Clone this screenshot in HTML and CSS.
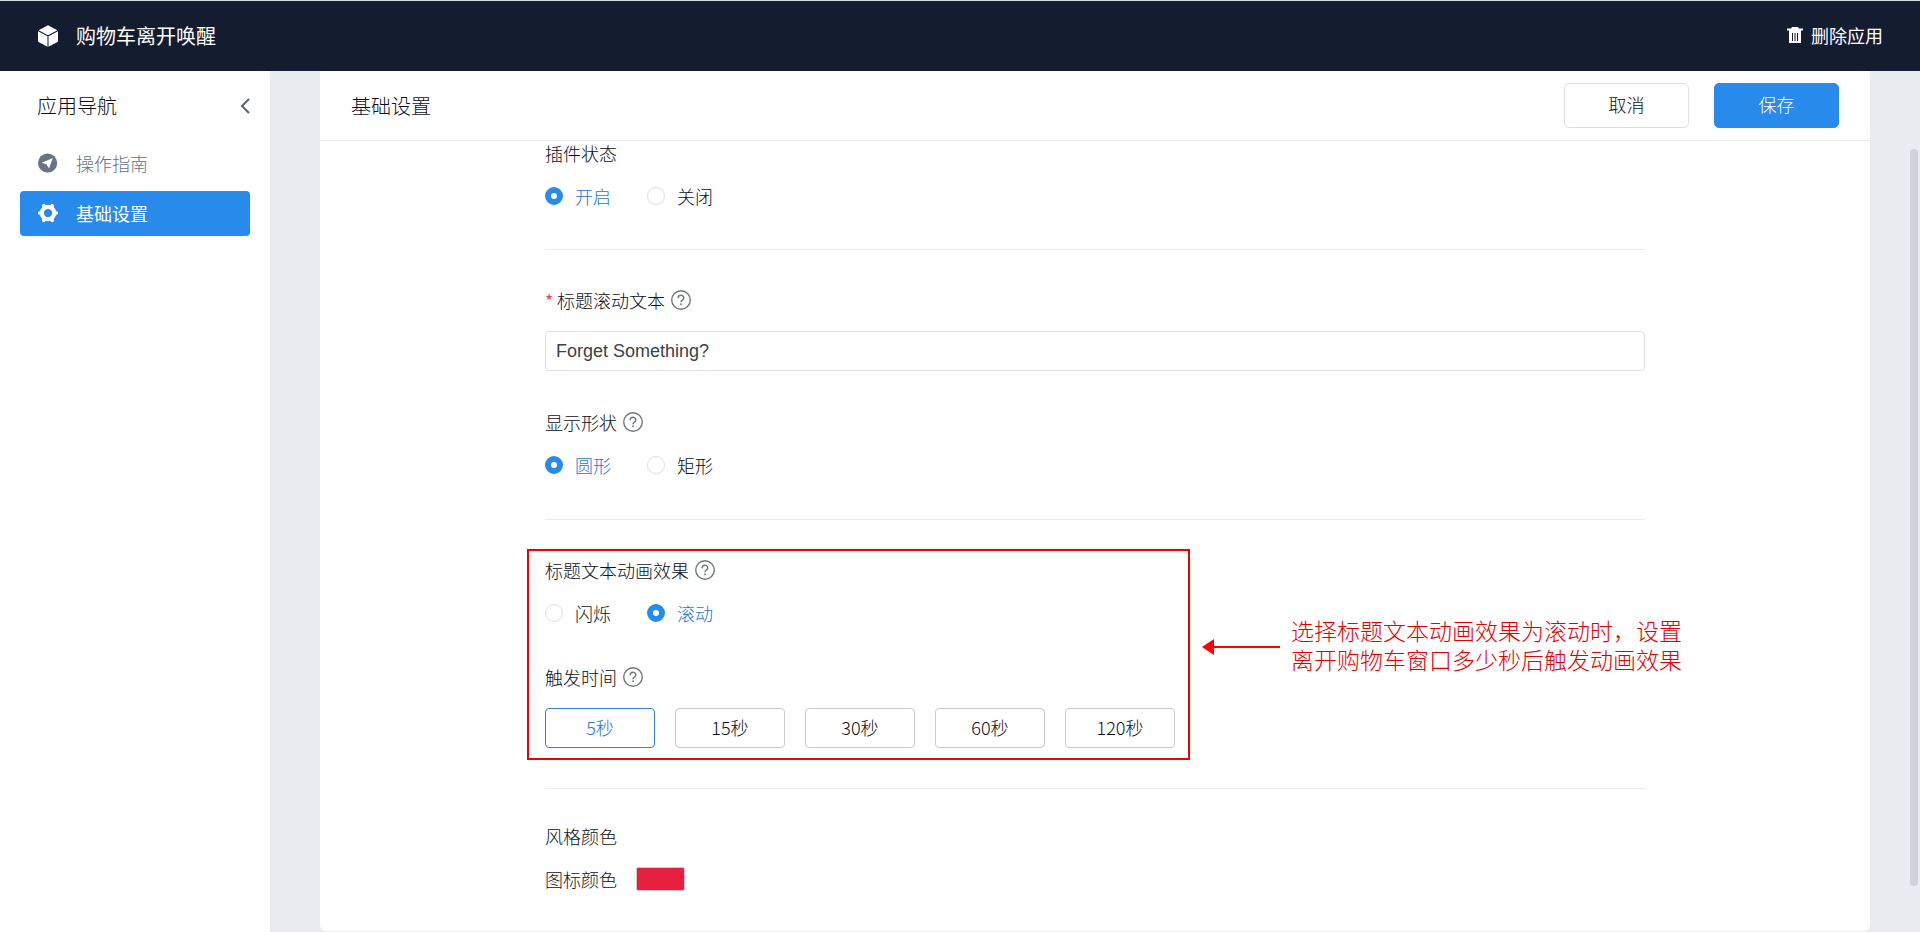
FILE: index.html
```html
<!DOCTYPE html>
<html lang="zh-CN">
<head>
<meta charset="utf-8">
<meta name="viewport" content="width=device-width, initial-scale=1">
<title>购物车离开唤醒</title>
<link rel="stylesheet" href="styles.css">
</head>
<body>
<svg class="sprite" aria-hidden="true">
  <symbol id="help" viewBox="0 0 20 20">
    <circle cx="10" cy="10" r="9.3" fill="none" stroke="currentColor" stroke-width="1.4"/>
    <path d="M7.200 8.200V7.600a2.800 2.600 0 1 1 4.300 2.400c-.9.600-1.500 1-1.500 2.200" fill="none" stroke="currentColor" stroke-width="1.500"/>
    <rect x="9.2" y="13.4" width="1.6" height="1.7" fill="currentColor"/>
  </symbol>
</svg>

<header class="topbar">
  <div class="brand">
    <svg class="icon" viewBox="0 0 20 22" aria-hidden="true">
      <path d="M10 .3 19.400 5.200 10 10.200.600 5.200zM0 6.200 9.500 11.300V21.700L0 16.700zM20 6.200 10.500 11.300V21.700L20 16.700z" fill="#fff"/>
    </svg>
    <h1 class="brand-name">购物车离开唤醒</h1>
  </div>
  <button class="delete" type="button">
    <svg class="trash" viewBox="0 0 16 16" aria-hidden="true">
      <path d="M5 0h6l1 1.500h4v2H0v-2h4z" fill="#fff"/>
      <path d="M2 3h12v13H2zM5 6v8h1V6zM7.500 6v8h1V6zM10 6v8h1V6z" fill="#fff" fill-rule="evenodd"/>
    </svg>
    删除应用
  </button>
</header>

<div class="layout">
  <aside class="sidebar">
    <div class="sidebar-head">
      <h2 class="heading">应用导航</h2>
      <button class="collapse" type="button" aria-label="收起">
        <svg class="chevron" viewBox="0 0 10 16" aria-hidden="true"><path d="M9 1 2 8l7 7" fill="none" stroke="currentColor" stroke-width="2"/></svg>
      </button>
    </div>
    <nav class="nav">
      <a class="nav-item" href="#guide">
        <svg class="icon" viewBox="0 0 20 20" aria-hidden="true">
          <circle cx="9.600" cy="10" r="9.600" fill="currentColor"/>
          <path d="M14.800 5 3.800 9.800l4.600 1.400L11 15.500z" fill="#fff"/>
        </svg>
        操作指南
      </a>
      <a class="nav-item active" href="#settings" aria-current="page">
        <svg class="icon" viewBox="0 0 20 20" aria-hidden="true">
          <circle cx="10" cy="10" r="6.200" fill="none" stroke="currentColor" stroke-width="4.200"/>
          <path d="M1.600 10h2.600M15.800 10h2.600M5.800 2.700 7 4.800M14.200 2.700 13 4.800M5.800 17.300 7 15.200M14.200 17.300 13 15.200" fill="none" stroke="currentColor" stroke-width="3.600" stroke-linecap="round"/>
        </svg>
        基础设置
      </a>
    </nav>
  </aside>

  <main class="card">
    <div class="card-head">
      <h2 class="heading">基础设置</h2>
      <div class="actions">
        <button class="btn" type="button">取消</button>
        <button class="btn primary" type="submit" form="settings">保存</button>
      </div>
    </div>

    <form class="form" id="settings">
      <section class="section first">
        <fieldset class="field">
          <legend class="label">插件状态</legend>
          <div class="radios">
            <label class="radio"><input type="radio" name="status" checked><span>开启</span></label>
            <label class="radio"><input type="radio" name="status"><span>关闭</span></label>
          </div>
        </fieldset>
      </section>

      <section class="section">
        <div class="field">
          <label class="label" for="title-text"><span class="required">*</span>标题滚动文本<svg class="help" aria-hidden="true"><use href="#help"/></svg></label>
          <input class="text" id="title-text" type="text" value="Forget Something?">
        </div>
        <fieldset class="field">
          <legend class="label">显示形状<svg class="help" aria-hidden="true"><use href="#help"/></svg></legend>
          <div class="radios">
            <label class="radio"><input type="radio" name="shape" checked><span>圆形</span></label>
            <label class="radio"><input type="radio" name="shape"><span>矩形</span></label>
          </div>
        </fieldset>
      </section>

      <section class="section timing">
        <div class="marked">
          <fieldset class="field">
            <legend class="label">标题文本动画效果<svg class="help" aria-hidden="true"><use href="#help"/></svg></legend>
            <div class="radios">
              <label class="radio"><input type="radio" name="effect"><span>闪烁</span></label>
              <label class="radio"><input type="radio" name="effect" checked><span>滚动</span></label>
            </div>
          </fieldset>
          <fieldset class="field">
            <legend class="label">触发时间<svg class="help" aria-hidden="true"><use href="#help"/></svg></legend>
            <div class="times">
              <button class="time selected" type="button" aria-pressed="true">5秒</button>
              <button class="time" type="button">15秒</button>
              <button class="time" type="button">30秒</button>
              <button class="time" type="button">60秒</button>
              <button class="time" type="button">120秒</button>
            </div>
          </fieldset>
          <div class="frame"></div>
          <div class="note">
            <svg class="arrow" viewBox="0 0 78 16" aria-hidden="true"><path d="M0 8 12 0v7h66v2H12v7z" fill="#f00"/></svg>
            <p class="note-text">选择标题文本动画效果为滚动时，设置<br>离开购物车窗口多少秒后触发动画效果</p>
          </div>
        </div>
      </section>

      <section class="section last">
        <h3 class="label">风格颜色</h3>
        <div class="color-row">
          <label for="icon-color">图标颜色</label>
          <input class="swatch" id="icon-color" type="color" value="#e8203f">
        </div>
      </section>
    </form>
  </main>
</div>
<div class="scroll-thumb"></div>
</body>
</html>
```

FILE: styles.css
```css
* { box-sizing: border-box; }

body {
  margin: 0;
  min-height: 100vh;
  display: flex;
  flex-direction: column;
  background: #e9edf2;
  color: #0c0e18;
  font: 300 18px/24px "Noto Sans CJK SC", sans-serif;
}

button, input { font: inherit; color: inherit; }
button { cursor: pointer; }
h1, h2, h3, p { margin: 0; font: inherit; }
svg { flex: none; display: block; }
.sprite { position: absolute; width: 0; height: 0; }

.topbar {
  height: 71px;
  padding: 0 37px 0 38px;
  display: flex;
  align-items: center;
  justify-content: space-between;
  border-top: 1px solid #d3dbe6;
  background: #141c30;
  color: #fff;
  font-weight: 400;
}
.brand { display: flex; align-items: center; gap: 18px; }
.brand-name, .heading { font-size: 20px; line-height: 28px; }
.icon { width: 20px; height: 20px; }
.brand .icon { height: 22px; }
.delete {
  display: flex;
  align-items: center;
  gap: 8px;
  padding: 0 0 2px;
  border: 0;
  background: none;
}
.trash { width: 16px; height: 16px; }

.layout { flex: 1; display: flex; }

.sidebar { width: 270px; flex: none; background: #fff; }
.sidebar-head {
  height: 70px;
  padding: 0 20px 0 37px;
  display: flex;
  align-items: center;
  justify-content: space-between;
}
.collapse { padding: 0; border: 0; background: none; color: #5c6474; }
.chevron { width: 10px; height: 16px; }
.nav { padding: 0 20px; display: flex; flex-direction: column; gap: 5px; }
.nav-item {
  height: 45px;
  padding: 0 18px 2px;
  display: flex;
  align-items: center;
  gap: 18px;
  border-radius: 4px;
  color: #6b7280;
  text-decoration: none;
}
.nav-item.active { background: #288aeb; color: #fff; font-weight: 400; }

.card {
  flex: 1;
  margin: 0 50px 1px;
  border-radius: 0 0 6px 6px;
  background: #fff;
}
.card-head {
  height: 70px;
  padding: 0 31px;
  display: flex;
  align-items: center;
  justify-content: space-between;
  border-bottom: 1px solid #e8eaec;
}
.actions { display: flex; gap: 25px; }
.btn {
  width: 125px;
  height: 45px;
  padding: 0 0 3px;
  border: 1px solid #dcdfe3;
  border-radius: 5px;
  background: #fff;
}
.btn.primary { border-color: #288aeb; background: #288aeb; color: #fff; }

.form { max-width: 1100px; margin: 0 auto; }
.section {
  padding: 38px 0 42px;
  display: flex;
  flex-direction: column;
  gap: 39px;
  border-bottom: 1px solid #ebebed;
}
.section.first { padding: 0 0 41px; }
.section.timing { padding-bottom: 40px; }
.section.last { padding: 35px 0 38px; gap: 0; border: 0; }

.field { min-width: 0; margin: 0; padding: 0; border: 0; }
.label {
  height: 24px;
  margin-bottom: 19px;
  padding: 0;
  display: flex;
  align-items: center;
}
.required { width: 12px; color: #e5484d; font-weight: 400; }
.help { width: 20px; height: 20px; margin-left: 6px; color: #73777d; }

.text {
  display: block;
  width: 100%;
  height: 40px;
  padding: 0 10px;
  border: 1px solid #dcdfe3;
  border-radius: 4px;
  background: #fff;
  color: #3c3f44;
  font-family: "Liberation Sans", Arial, sans-serif;
}

.radios { display: flex; gap: 36px; }
.radio { display: flex; align-items: center; gap: 12px; }
.radio input {
  appearance: none;
  width: 18px;
  height: 18px;
  margin: 0;
  border: 1px solid #dcdfe3;
  border-radius: 50%;
  background: #fff;
}
.radio input:checked { border: 6px solid #288aeb; }
.radio input:checked + span { color: #1f74d8; }

.marked {
  position: relative;
  width: fit-content;
  display: flex;
  flex-direction: column;
  gap: 40px;
}
.times { display: flex; gap: 20px; }
.time {
  width: 110px;
  height: 40px;
  padding: 0 0 3px;
  border: 1px solid #c8cacd;
  border-radius: 4px;
  background: #fff;
}
.time.selected { border-color: #2f80df; color: #1f74d8; }

.frame {
  position: absolute;
  inset: -9px -15px -12px -18px;
  border: 2px solid #f00000;
  pointer-events: none;
}
.note {
  position: absolute;
  top: 60px;
  left: calc(100% + 27px);
  display: flex;
  align-items: center;
  gap: 11px;
}
.arrow { width: 78px; height: 16px; }
.note-text {
  color: #e60000;
  font-family: "Liberation Serif", "Noto Sans CJK SC", serif;
  font-size: 23px;
  line-height: 29px;
  white-space: nowrap;
}

.color-row { display: flex; align-items: center; gap: 19px; }
.swatch {
  appearance: none;
  width: 49px;
  height: 24px;
  padding: 0;
  border: 1px solid #c8cacd;
  border-radius: 2px;
  background: none;
}
.swatch::-webkit-color-swatch-wrapper { padding: 0; }
.swatch::-webkit-color-swatch { border: 0; }

.scroll-thumb {
  position: fixed;
  top: 149px;
  right: 2px;
  bottom: 46px;
  width: 8px;
  border-radius: 4px;
  background: #cfd2d9;
}
```
